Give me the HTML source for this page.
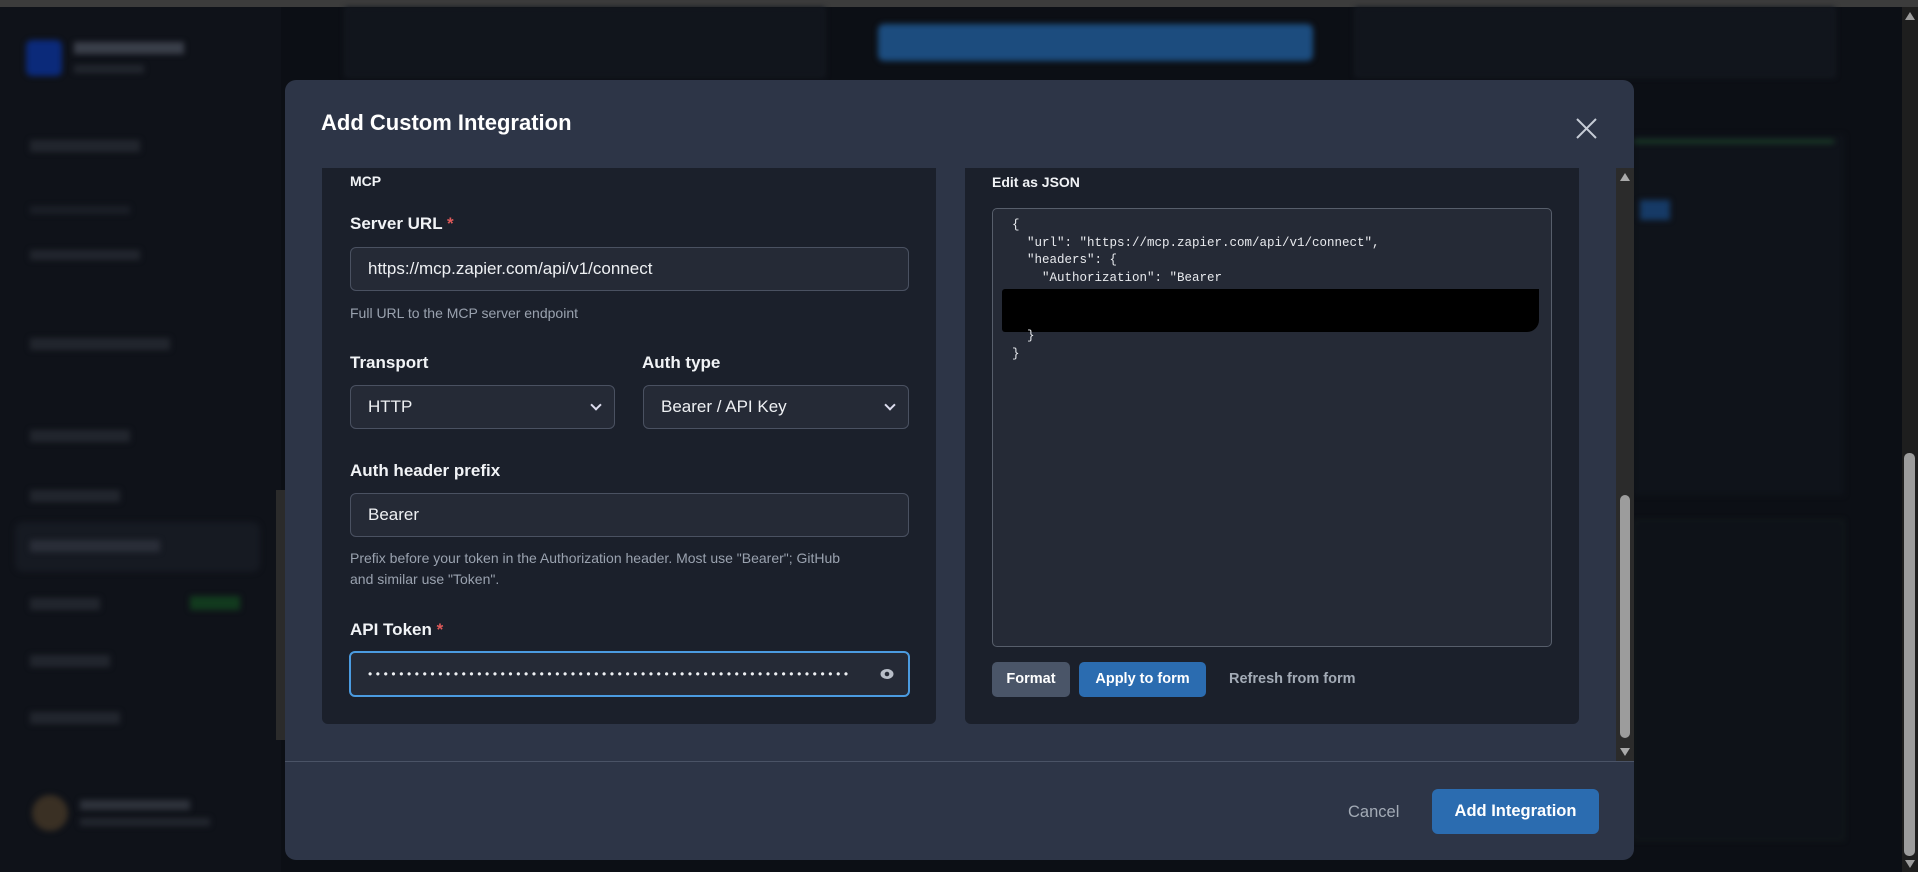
<!DOCTYPE html>
<html><head><meta charset="utf-8"><style>
*{box-sizing:border-box;margin:0;padding:0}
body{width:1918px;height:872px;overflow:hidden;background:#0c0f15;font-family:"Liberation Sans",sans-serif;position:relative}
.a{position:absolute}
.bl{filter:blur(3px)}
.lbl{position:absolute;color:#f1f3f6;font-weight:bold;font-size:17px}
.req{color:#e05a5a}
.inp{position:absolute;background:#252a36;border:1px solid #4a5161;border-radius:6px;color:#eef0f3;font-size:17px;padding-left:17px;display:flex;align-items:center}
.help{position:absolute;color:#9aa2af;font-size:14px;line-height:21px}
.chev{position:absolute;right:14px;top:15px;width:8px;height:8px;border-right:2px solid #dde;border-bottom:2px solid #dde;transform:rotate(45deg)}
.mono{font-family:"Liberation Mono",monospace;font-size:12.5px;color:#e8eaee;white-space:pre;position:absolute;left:1012px}
</style></head><body>
<div class="a" style="left:0;top:0;width:1918px;height:7px;background:#3c3c3c"></div>
<div class="a" style="left:0;top:7px;width:281px;height:865px;background:#0f1219"></div>
<div class="a bl" style="left:26px;top:40px;width:36px;height:36px;background:#0b2a7a;border-radius:6px"></div>
<div class="a bl" style="left:74px;top:42px;width:110px;height:12px;background:#3a3f4a"></div>
<div class="a bl" style="left:74px;top:65px;width:70px;height:8px;background:#22262e"></div>
<div class="a bl" style="left:30px;top:140px;width:110px;height:12px;background:#22262e"></div>
<div class="a bl" style="left:30px;top:206px;width:100px;height:8px;background:#1b1f27"></div>
<div class="a bl" style="left:30px;top:250px;width:110px;height:10px;background:#22262e"></div>
<div class="a bl" style="left:30px;top:338px;width:140px;height:12px;background:#22262e"></div>
<div class="a bl" style="left:30px;top:430px;width:100px;height:12px;background:#22262e"></div>
<div class="a bl" style="left:30px;top:490px;width:90px;height:12px;background:#22262e"></div>
<div class="a bl" style="left:15px;top:522px;width:245px;height:50px;background:#161a22;border-radius:8px"></div>
<div class="a bl" style="left:30px;top:540px;width:130px;height:12px;background:#2a2e38"></div>
<div class="a bl" style="left:30px;top:598px;width:70px;height:12px;background:#22262e"></div>
<div class="a bl" style="left:190px;top:596px;width:50px;height:14px;background:#123a1e"></div>
<div class="a bl" style="left:30px;top:655px;width:80px;height:12px;background:#22262e"></div>
<div class="a bl" style="left:30px;top:712px;width:90px;height:12px;background:#22262e"></div>
<div class="a bl" style="left:32px;top:795px;width:36px;height:36px;background:#3a3024;border-radius:50%"></div>
<div class="a bl" style="left:80px;top:800px;width:110px;height:10px;background:#2e323b"></div>
<div class="a bl" style="left:80px;top:818px;width:130px;height:8px;background:#22262e"></div>
<div class="a" style="left:276px;top:490px;width:9px;height:250px;background:#2b2b2b"></div>
<div class="a bl" style="left:345px;top:7px;width:480px;height:70px;background:#11151c;border:1px solid #1d222b"></div>
<div class="a bl" style="left:878px;top:24px;width:435px;height:37px;background:#1c4c7e;border-radius:6px"></div>
<div class="a bl" style="left:1355px;top:7px;width:480px;height:70px;background:#11151c;border:1px solid #1d222b"></div>
<div class="a bl" style="left:1634px;top:135px;width:210px;height:360px;background:#0f131a"></div>
<div class="a bl" style="left:1634px;top:140px;width:200px;height:3px;background:#1e4a2c"></div>
<div class="a bl" style="left:1640px;top:200px;width:30px;height:20px;background:#163a66"></div>
<div class="a bl" style="left:1634px;top:520px;width:210px;height:320px;background:#0e1218;border:1px solid #1a2520"></div>
<div class="a" style="left:1902px;top:7px;width:16px;height:865px;background:#1e1e1e"></div>
<div class="a" style="left:1904px;top:453px;width:11px;height:403px;background:#9c9c9c;border-radius:5px"></div>
<div class="a" style="left:1905px;top:12px;width:0;height:0;border-left:5px solid transparent;border-right:5px solid transparent;border-bottom:8px solid #9c9c9c"></div>
<div class="a" style="left:1905px;top:860px;width:0;height:0;border-left:5px solid transparent;border-right:5px solid transparent;border-top:8px solid #9c9c9c"></div>

<div class="a" style="left:285px;top:80px;width:1349px;height:780px;background:#2d3547;border-radius:11px"></div>
<div class="a" style="left:321px;top:110px;color:#fff;font-size:22px;font-weight:bold">Add Custom Integration</div>
<svg class="a" style="left:1576px;top:118px" width="21" height="21" viewBox="0 0 21 21"><path d="M1 1L20 20M20 1L1 20" stroke="#c6ccd6" stroke-width="2"/></svg>
<div class="a" style="left:285px;top:761px;width:1349px;height:1px;background:#4a5366"></div>
<div class="a" style="left:1616px;top:168px;width:18px;height:593px;background:#2b2b2b"></div>
<div class="a" style="left:1620px;top:495px;width:10px;height:243px;background:#9c9c9c;border-radius:5px"></div>
<div class="a" style="left:1620px;top:173px;width:0;height:0;border-left:5px solid transparent;border-right:5px solid transparent;border-bottom:8px solid #aaa"></div>
<div class="a" style="left:1620px;top:748px;width:0;height:0;border-left:5px solid transparent;border-right:5px solid transparent;border-top:8px solid #aaa"></div>

<div class="a" style="left:322px;top:168px;width:614px;height:556px;background:#1b202b;border-radius:0 0 6px 6px"></div>
<div class="lbl" style="left:350px;top:173px;font-size:14px">MCP</div>
<div class="lbl" style="left:350px;top:214px">Server URL <span class="req">*</span></div>
<div class="inp" style="left:350px;top:247px;width:559px;height:44px">https://mcp.zapier.com/api/v1/connect</div>
<div class="help" style="left:350px;top:303px">Full URL to the MCP server endpoint</div>
<div class="lbl" style="left:350px;top:353px">Transport</div>
<div class="lbl" style="left:642px;top:353px">Auth type</div>
<div class="inp" style="left:350px;top:385px;width:265px;height:44px">HTTP<span class="chev"></span></div>
<div class="inp" style="left:643px;top:385px;width:266px;height:44px">Bearer / API Key<span class="chev"></span></div>
<div class="lbl" style="left:350px;top:461px">Auth header prefix</div>
<div class="inp" style="left:350px;top:493px;width:559px;height:44px">Bearer</div>
<div class="help" style="left:350px;top:548px;width:580px;white-space:nowrap">Prefix before your token in the Authorization header. Most use "Bearer"; GitHub<br>and similar use "Token".</div>
<div class="lbl" style="left:350px;top:620px">API Token <span class="req">*</span></div>
<div class="inp" style="left:349px;top:651px;width:561px;height:46px;border:2px solid #4b9be0;font-size:12px;letter-spacing:3.6px;overflow:hidden;white-space:nowrap">••••••••••••••••••••••••••••••••••••••••••••••••••••••••••••••</div>
<div class="a" style="left:866px;top:655px;width:40px;height:38px;background:#252a36"></div>
<svg class="a" style="left:880px;top:668px" width="14" height="12" viewBox="0 0 14 12"><ellipse cx="7" cy="6" rx="6.5" ry="5" fill="#b8bec8"/><circle cx="7" cy="6" r="2.3" fill="#252a36"/></svg>

<div class="a" style="left:965px;top:168px;width:614px;height:556px;background:#1b202b;border-radius:0 0 6px 6px"></div>
<div class="lbl" style="left:992px;top:174px;font-size:14px">Edit as JSON</div>
<div class="a" style="left:992px;top:208px;width:560px;height:439px;background:#252a36;border:1px solid #575e6b;border-radius:5px"></div>
<div class="mono" style="top:218px">{</div>
<div class="mono" style="top:236px">  "url": "https://mcp.zapier.com/api/v1/connect",</div>
<div class="mono" style="top:253px">  "headers": {</div>
<div class="mono" style="top:271px">    "Authorization": "Bearer</div>
<div class="a" style="left:1002px;top:289px;width:537px;height:43px;background:#000;border-radius:3px 0 12px 3px"></div>
<div class="mono" style="top:329px">  }</div>
<div class="mono" style="top:347px">}</div>
<div class="a" style="left:992px;top:662px;width:78px;height:35px;background:#4a5568;border-radius:5px;color:#fff;font-size:14.5px;font-weight:bold;text-align:center;line-height:35px">Format</div>
<div class="a" style="left:1079px;top:662px;width:127px;height:35px;background:#2b6cb0;border-radius:5px;color:#fff;font-size:14.5px;font-weight:bold;text-align:center;line-height:35px">Apply to form</div>
<div class="a" style="left:1229px;top:662px;color:#a3abb6;font-size:14.5px;font-weight:bold;line-height:35px">Refresh from form</div>

<div class="a" style="left:1348px;top:801px;color:#a3abb6;font-size:16.5px;line-height:22px">Cancel</div>
<div class="a" style="left:1432px;top:789px;width:167px;height:45px;background:#2b6cb0;border-radius:6px;color:#fff;font-size:16.5px;font-weight:bold;text-align:center;line-height:45px">Add Integration</div>
</body></html>
